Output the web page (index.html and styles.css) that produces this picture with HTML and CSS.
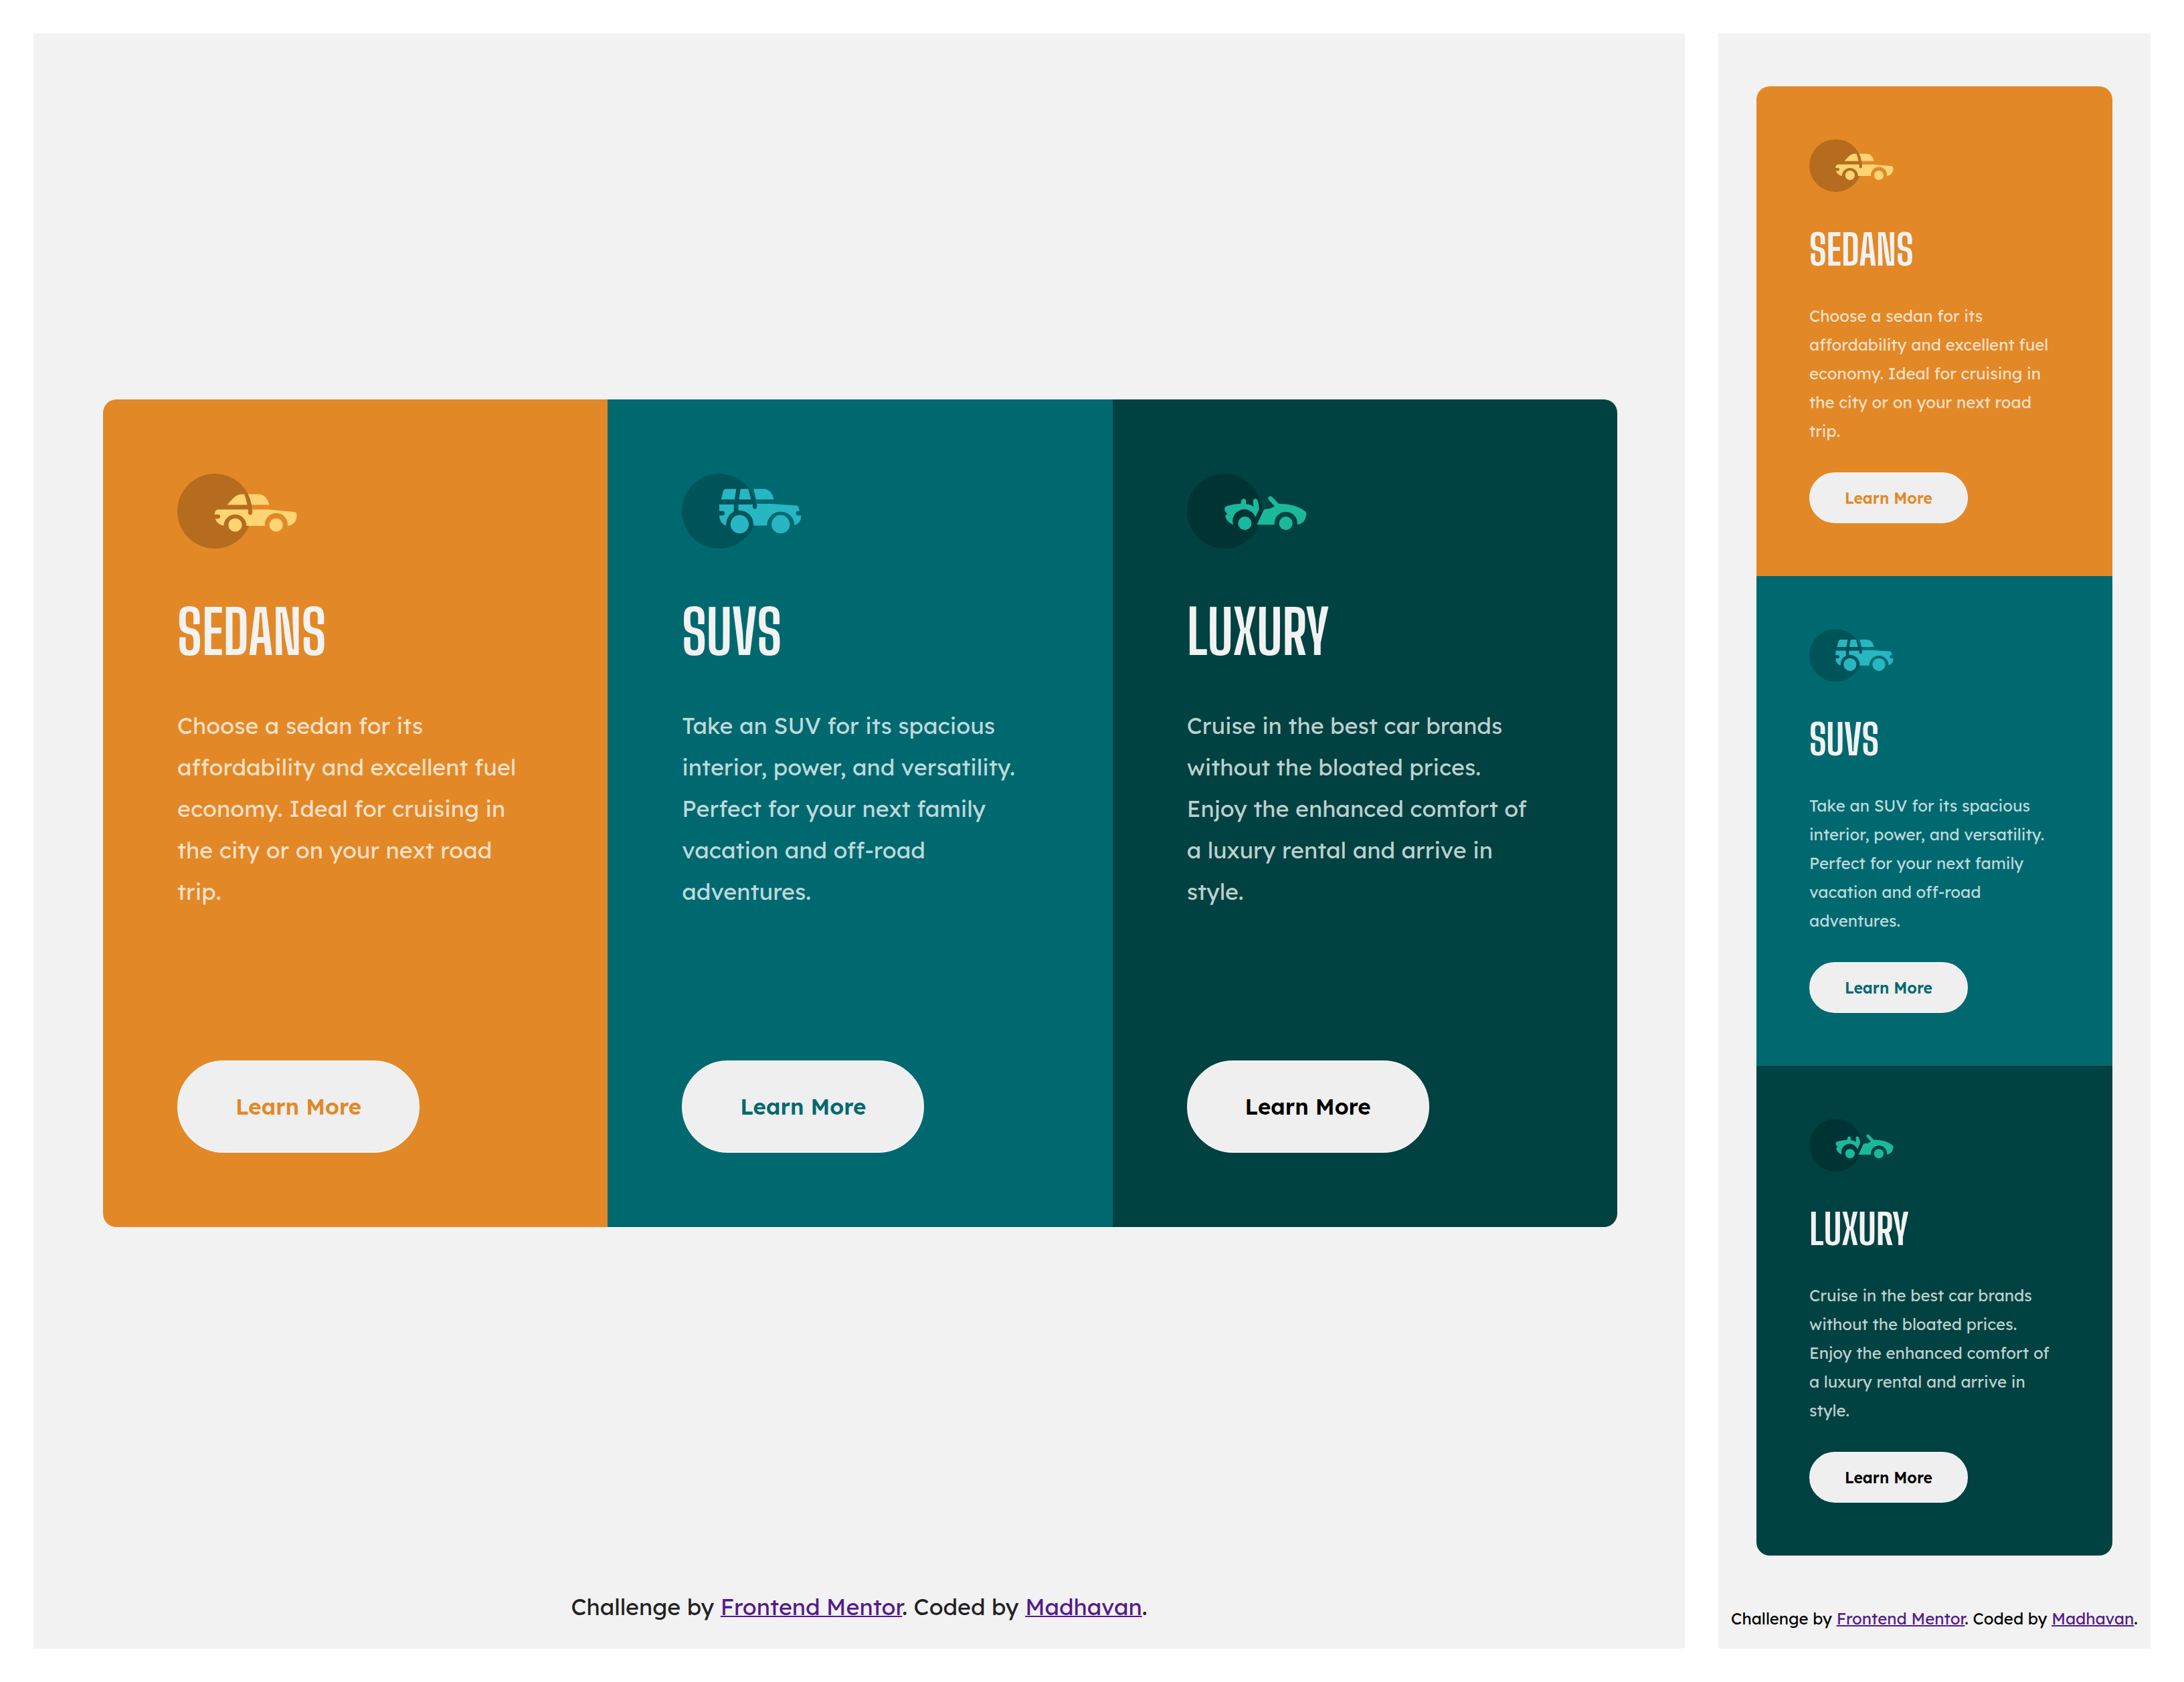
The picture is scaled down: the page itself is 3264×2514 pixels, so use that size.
FILE: index.html
```
<!DOCTYPE html>
<html lang="en">
<head>
  <meta charset="utf-8">
  <meta name="viewport" content="width=device-width, initial-scale=1">
  <title>3-column preview card component</title>
  <link rel="stylesheet" href="styles.css">
</head>
<body>
  <svg class="sprite" aria-hidden="true">
    <symbol id="icon-sedans" viewBox="0 0 64 40">
      <circle cx="20" cy="20" r="20" fill="#000" opacity=".2"/>
      <g fill="#ffd473">
        <path d="M26.7 16.6C29.5 13.4 31.4 11 34.2 11H35.8Q36.8 13.6 37.4 16.6Z"/>
        <path d="M37.8 11H43.2C46.8 11 48.4 13.6 49.1 16.6H39.7Q39.2 13.4 37.8 11Z"/>
        <path d="M21.5 19.1H37.9V21Q37.9 22 39 22Q40.1 22 40.1 21V19.1H48.6L62 20.4Q63.8 20.6 63.8 22.2Q63.8 27 58.9 27.9A6.1 6.1 0 1 0 46.8 27.9H37A6.1 6.1 0 1 0 24.8 27.9Q21 26.8 20.3 24H21.8A1.1 1.1 0 0 0 21.8 21.8H20Q19.8 19.8 21.5 19.1Z"/>
        <circle cx="30.9" cy="27.4" r="3.6"/>
        <circle cx="52.8" cy="27.4" r="3.6"/>
      </g>
    </symbol>
    <symbol id="icon-suvs" viewBox="0 0 64 40">
      <circle cx="20" cy="20" r="20" fill="#000" opacity=".2"/>
      <g fill="#27b6c2">
        <path d="M21 13.7L22.1 9.4Q22.5 8.1 23.6 8.1H29.1L28.2 13.7Z"/>
        <path d="M31.4 8.1H35.5L37 13.7H30.5Z"/>
        <path d="M38.3 8.1H43.5C46.9 8.1 48.6 10.8 49.1 13.7H39.7Z"/>
        <path d="M20 16.4H27.8V20.2Q23.5 22.5 23.7 27.7Q20.2 26.6 20 22.3H21.7A1.2 1.2 0 0 0 21.7 19.9H20Z"/>
        <path d="M30.2 16.4H37.9V17.8Q37.9 18.8 39 18.8Q40.1 18.8 40.1 17.8V16.1H48L61 17Q62.2 17.1 62.4 18L62.9 19.9H62.2A1.2 1.2 0 0 0 62.2 22.3H63.8Q63.8 26.4 60.2 27.5A7.3 7.3 0 1 0 45.5 27.7H38.2A7.3 7.3 0 0 0 30.2 19.7Z"/>
        <circle cx="30.9" cy="27" r="4.9"/>
        <circle cx="52.8" cy="27" r="4.9"/>
      </g>
    </symbol>
    <symbol id="icon-luxury" viewBox="0 0 64 40">
      <circle cx="20" cy="20" r="20" fill="#000" opacity=".2"/>
      <g fill="#1bb89c">
        <path d="M20 18.7Q20.2 17.5 21.6 17.2Q25 16.2 28.7 16L29 14.6Q29.2 13.4 30.3 13.4Q31.5 13.5 31.5 14.7V16.2Q34 16.4 35.6 17.7L35.3 14.8Q35.3 13.4 36.5 13.4Q37.5 13.4 37.8 14.6Q39 18 38.2 19.6L36.5 23.3A6.2 6.2 0 0 0 24.7 27.2Q21 25.8 20.4 22.6L21.5 21.3Q20.2 20.6 20 18.7Z"/>
        <path d="M37.3 27.2L40.8 19.7Q41.2 18.8 42.2 18.8Q44.8 18.8 46.8 17.4L43.6 13.8Q43 12.7 43.9 12.1Q44.8 11.6 45.6 12.5L49 16.1C54.6 15.9 60.5 17.6 63.4 20.4Q64 21 63.7 22.3Q63 26.5 58.9 27.2A6.1 6.1 0 1 0 46.8 27.2Z"/>
        <circle cx="30.9" cy="26.5" r="3.6"/>
        <circle cx="52.8" cy="26.5" r="3.6"/>
      </g>
    </symbol>
  </svg>

  <section class="screen screen-wide">
    <main class="stage">
      <div class="cards">
        <article class="card sedans">
          <svg class="icon" aria-hidden="true"><use href="#icon-sedans"/></svg>
          <h2 class="title">SEDANS</h2>
          <p class="text">Choose a sedan for its affordability and excellent fuel economy. Ideal for cruising in the city or on your next road trip.</p>
          <button class="more" type="button">Learn More</button>
        </article>
        <article class="card suvs">
          <svg class="icon" aria-hidden="true"><use href="#icon-suvs"/></svg>
          <h2 class="title">SUVS</h2>
          <p class="text">Take an SUV for its spacious interior, power, and versatility. Perfect for your next family vacation and off-road adventures.</p>
          <button class="more" type="button">Learn More</button>
        </article>
        <article class="card luxury">
          <svg class="icon" aria-hidden="true"><use href="#icon-luxury"/></svg>
          <h2 class="title">LUXURY</h2>
          <p class="text">Cruise in the best car brands without the bloated prices. Enjoy the enhanced comfort of a luxury rental and arrive in style.</p>
          <button class="more" type="button">Learn More</button>
        </article>
      </div>
    </main>
    <footer class="credit">Challenge by <a href="#">Frontend Mentor</a>. Coded by <a href="#">Madhavan</a>.</footer>
  </section>

  <section class="screen screen-narrow">
    <main class="stage">
      <div class="cards">
        <article class="card sedans">
          <svg class="icon" aria-hidden="true"><use href="#icon-sedans"/></svg>
          <h2 class="title">SEDANS</h2>
          <p class="text">Choose a sedan for its affordability and excellent fuel economy. Ideal for cruising in the city or on your next road trip.</p>
          <button class="more" type="button">Learn More</button>
        </article>
        <article class="card suvs">
          <svg class="icon" aria-hidden="true"><use href="#icon-suvs"/></svg>
          <h2 class="title">SUVS</h2>
          <p class="text">Take an SUV for its spacious interior, power, and versatility. Perfect for your next family vacation and off-road adventures.</p>
          <button class="more" type="button">Learn More</button>
        </article>
        <article class="card luxury">
          <svg class="icon" aria-hidden="true"><use href="#icon-luxury"/></svg>
          <h2 class="title">LUXURY</h2>
          <p class="text">Cruise in the best car brands without the bloated prices. Enjoy the enhanced comfort of a luxury rental and arrive in style.</p>
          <button class="more" type="button">Learn More</button>
        </article>
      </div>
    </main>
    <footer class="credit">Challenge by <a href="#">Frontend Mentor</a>. Coded by <a href="#">Madhavan</a>.</footer>
  </section>
</body>
</html>
```
FILE: styles.css
```
* {
  box-sizing: border-box;
}

body {
  margin: 0;
  min-height: 100vh;
  padding: 50px;
  display: grid;
  grid-template-columns: 3.82fr 1fr;
  gap: 50px;
  background: #fff;
  color: #000;
  font-family: "Lexend Deca", Inter, sans-serif;
}

.sprite {
  position: absolute;
  width: 0;
  height: 0;
}

.screen {
  display: flex;
  flex-direction: column;
  background: #f2f2f2;
}

/* Type and spacing scale of each screen */
.screen-wide {
  --pad: 111px;
  --icon-w: 179px;
  --icon-h: 112px;
  --title: 90px;
  --title-line: 120px;
  --title-top: 64px;
  --title-bottom: 50px;
  --text: 34px;
  --text-line: 62px;
  --button-text: 33px;
  --button-top: 221px;
  --button-w: 362px;
  --button-h: 138px;
  color: #222;
}

.screen-narrow {
  --pad: 79px;
  --icon-w: 126px;
  --icon-h: 79px;
  --title: 63px;
  --title-line: 84px;
  --title-top: 44px;
  --title-bottom: 36px;
  --text: 24px;
  --text-line: 43px;
  --button-text: 23px;
  --button-top: 40px;
  --button-w: 237px;
  --button-h: 76px;
}

.stage {
  flex: 1;
  display: flex;
  align-items: center;
}

.screen-wide .stage {
  padding: 0 101px 0 104px;
}

.screen-narrow .stage {
  padding: 79px 57px 0;
  align-items: flex-start;
}

.cards {
  flex: 1;
  display: grid;
  border-radius: 20px;
  overflow: hidden;
}

.screen-wide .cards {
  grid-template-columns: repeat(3, 1fr);
}

.card {
  display: flex;
  flex-direction: column;
  align-items: flex-start;
  padding: var(--pad);
}

.sedans {
  background: #e38826;
  --accent: #e38826;
}

.suvs {
  background: #006970;
  --accent: #006970;
}

.luxury {
  background: #004241;
  --accent: #000;
}

.icon {
  width: var(--icon-w);
  height: var(--icon-h);
}

.title {
  margin: var(--title-top) 0 var(--title-bottom);
  color: #f2f2f2;
  font-family: "Big Shoulders Display", "Open Sans Condensed", sans-serif;
  font-size: var(--title);
  font-weight: 700;
  line-height: var(--title-line);
}

.text {
  margin: 0;
  color: rgba(255, 255, 255, 0.75);
  font-size: var(--text);
  line-height: var(--text-line);
}

.more {
  margin-top: var(--button-top);
  width: var(--button-w);
  height: var(--button-h);
  padding: 0;
  border: 2px solid #f2f2f2;
  border-radius: 70px;
  background: #efefef;
  color: var(--accent);
  font: inherit;
  font-size: var(--button-text);
  font-weight: 600;
}

.credit {
  padding-bottom: 40px;
  font-size: var(--text);
  line-height: 44px;
  text-align: center;
}

.screen-narrow .credit {
  padding-bottom: 23px;
}

.credit a {
  color: #551a8b;
  text-decoration-thickness: 2px;
}
```
